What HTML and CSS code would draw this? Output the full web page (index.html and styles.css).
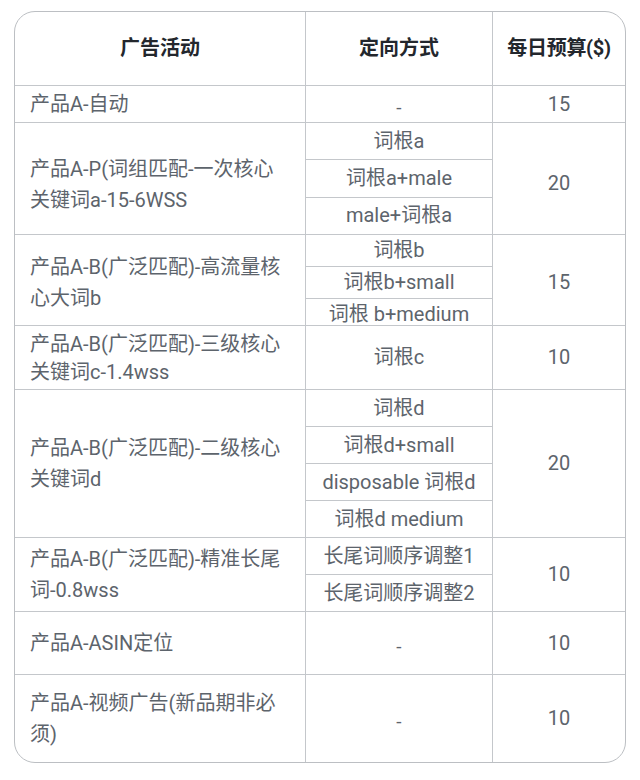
FILE: index.html
```html
<!DOCTYPE html>
<html lang="zh-CN">
<head>
<meta charset="utf-8">
<title>广告活动</title>
<link rel="stylesheet" href="styles.css">
</head>
<body>
<div class="tbl">
  <div class="row head">
    <div class="c c1">广告活动</div>
    <div class="c c2">定向方式</div>
    <div class="c c3">每日预算($)</div>
  </div>
  <div class="row h37">
    <div class="c c1">产品A-自动</div>
    <div class="c c2"><span class="dash">-</span></div>
    <div class="c c3">15</div>
  </div>
  <div class="row h112">
    <div class="c c1 low">产品A-P(词组匹配-一次核心关键词a-15-6WSS</div>
    <div class="c c2 split">
      <div class="sub">词根a</div>
      <div class="sub">词根a+male</div>
      <div class="sub">male+词根a</div>
    </div>
    <div class="c c3 low">20</div>
  </div>
  <div class="row h91">
    <div class="c c1">产品A-B(广泛匹配)-高流量核心大词b</div>
    <div class="c c2 split">
      <div class="sub s31">词根b</div>
      <div class="sub s31">词根b+small</div>
      <div class="sub">词根 b+medium</div>
    </div>
    <div class="c c3">15</div>
  </div>
  <div class="row h64">
    <div class="c c1 tight">产品A-B(广泛匹配)-三级核心关键词c-1.4wss</div>
    <div class="c c2">词根c</div>
    <div class="c c3">10</div>
  </div>
  <div class="row h148">
    <div class="c c1">产品A-B(广泛匹配)-二级核心关键词d</div>
    <div class="c c2 split">
      <div class="sub">词根d</div>
      <div class="sub">词根d+small</div>
      <div class="sub">disposable 词根d</div>
      <div class="sub">词根d medium</div>
    </div>
    <div class="c c3">20</div>
  </div>
  <div class="row h74">
    <div class="c c1">产品A-B(广泛匹配)-精准长尾词-0.8wss</div>
    <div class="c c2 split">
      <div class="sub">长尾词顺序调整1</div>
      <div class="sub">长尾词顺序调整2</div>
    </div>
    <div class="c c3">10</div>
  </div>
  <div class="row h63">
    <div class="c c1">产品A-ASIN定位</div>
    <div class="c c2"><span class="dash">-</span></div>
    <div class="c c3">10</div>
  </div>
  <div class="row h88">
    <div class="c c1">产品A-视频广告(新品期非必须)</div>
    <div class="c c2"><span class="dash">-</span></div>
    <div class="c c3">10</div>
  </div>
</div>
</body>
</html>
```
FILE: styles.css
```css
* { box-sizing: border-box; }
html, body { background: #ffffff; }
body {
  margin: 0;
  padding: 11px 14px 0 14px;
  font-family: Roboto, "Noto Sans CJK SC", sans-serif;
  font-size: 20px;
  color: #5d646c;
}
.tbl {
  width: 612px;
  border: 1px solid #bcbfc3;
  border-radius: 21px;
  overflow: hidden;
}
.row {
  display: grid;
  grid-template-columns: 291px 187px 132px;
  border-top: 1px solid #c4c7cb;
}
.row.head {
  border-top: 0;
  height: 73px;
  font-weight: 700;
  color: #23272d;
}
.h37 { height: 37px; }
.h112 { height: 112px; }
.h91 { height: 91px; }
.h64 { height: 64px; }
.h148 { height: 148px; }
.h74 { height: 74px; }
.h63 { height: 63px; }
.h88 { height: 88px; }
.c {
  display: flex;
  align-items: center;
  line-height: 31px;
}
.c1 {
  padding: 0 20px 0 15px;
  border-right: 1px solid #c4c7cb;
}
.head .c1 { justify-content: center; padding: 0; }
.c1.tight { line-height: 28px; }
.c1.low { padding-top: 12px; }
.c3.low { padding-top: 10px; }
.c2 {
  justify-content: center;
  text-align: center;
  border-right: 1px solid #c4c7cb;
}
.c3 {
  justify-content: center;
  text-align: center;
}
.head .c3 { letter-spacing: -0.3px; }
.split {
  flex-direction: column;
  align-items: stretch;
  justify-content: stretch;
}
.sub {
  flex: 1 1 0;
  display: flex;
  align-items: center;
  justify-content: center;
  border-top: 1px solid #c4c7cb;
  white-space: nowrap;
}
.sub:first-child { border-top: 0; }
.sub.s31 { flex: 0 0 31px; }
.dash {
  position: relative;
  top: 3px;
  font-size: 19px;
}
```
